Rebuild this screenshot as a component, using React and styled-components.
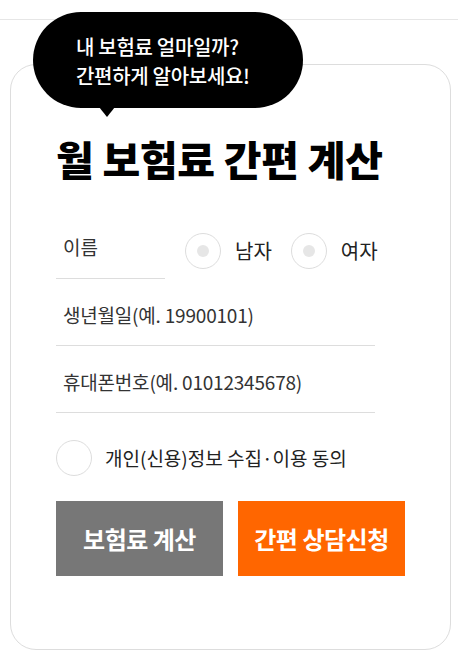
import React from 'react'
import styled, { createGlobalStyle } from 'styled-components'

const GlobalStyle = createGlobalStyle`
body {
  margin: 0;
  background: #fff;
  font-family: "Noto Sans CJK KR", "Noto Sans", sans-serif;
  color: #333;
}
* { box-sizing: border-box; }
`

export default function App() {
  return (
    <>
      <GlobalStyle />
      <Page>
        <TopLine />
        <Bubble>
          내 보험료 얼마일까?<br />
          간편하게 알아보세요!
        </Bubble>

        <CardWrap>
          <Card>
            <Title>월 보험료 간편 계산</Title>

            <NameRow>
              <NameField>이름</NameField>
              <GenderGroup>
                <Radio><Circle><Dot /></Circle><RadioLabel>남자</RadioLabel></Radio>
                <Radio><Circle><Dot /></Circle><RadioLabel>여자</RadioLabel></Radio>
              </GenderGroup>
            </NameRow>

            <Field>생년월일(예. 19900101)</Field>
            <Field>휴대폰번호(예. 01012345678)</Field>

            <AgreeRow>
              <Circle />
              <AgreeText>개인(신용)정보 수집·이용 동의</AgreeText>
            </AgreeRow>

            <Buttons>
              <Button $bg="#777777">보험료 계산</Button>
              <Button $bg="#ff6600">간편 상담신청</Button>
            </Buttons>
          </Card>
        </CardWrap>
      </Page>
    </>
  )
}

// Styled Components
const Page = styled.div`
position: relative;
width: 458px;
min-height: 654px;
`

const TopLine = styled.div`
height: 20px;
border-bottom: 1px solid #e6e6e6;
`

const Bubble = styled.div`
position: absolute;
top: 12px;
left: 33px;
width: 270px;
height: 96px;
padding: 20px 0 0 43px;
border-radius: 48px;
background: #000;
color: #fff;
font-size: 20px;
font-weight: 500;
line-height: 29px;
letter-spacing: -0.3px;
z-index: 2;
&::after {
  content: '';
  position: absolute;
  left: 66px;
  bottom: -9px;
  border-left: 8px solid transparent;
  border-right: 8px solid transparent;
  border-top: 10px solid #000;
}
`

const CardWrap = styled.div`
padding: 44px 7px 4px 10px;
`

const Card = styled.div`
border: 1px solid #dddddd;
border-radius: 26px;
padding: 68px 45px 73px 45px;
`

const Title = styled.h1`
margin: 0;
font-size: 41px;
line-height: 50px;
font-weight: 900;
color: #000;
letter-spacing: -0.3px;
`

const NameRow = styled.div`
display: flex;
align-items: center;
margin-top: 35px;
`

const NameField = styled.div`
width: 109px;
height: 61px;
padding: 17px 0 0 7px;
border-bottom: 1px solid #dddddd;
font-size: 19px;
line-height: 24px;
`

const GenderGroup = styled.div`
display: flex;
align-items: center;
gap: 19px;
margin-left: 20px;
padding-top: 5px;
`

const Radio = styled.label`
display: flex;
align-items: center;
gap: 14px;
`

const Circle = styled.span`
display: flex;
align-items: center;
justify-content: center;
width: 36px;
height: 36px;
border: 1px solid #dddddd;
border-radius: 50%;
background: #fff;
flex-shrink: 0;
`

const Dot = styled.span`
width: 12px;
height: 12px;
border-radius: 50%;
background: #e6e6e6;
`

const RadioLabel = styled.span`
font-size: 20px;
line-height: 24px;
color: #222;
`

const Field = styled.div`
width: 319px;
height: 67px;
padding: 24px 0 0 7px;
border-bottom: 1px solid #dddddd;
font-size: 19px;
line-height: 24px;
letter-spacing: -0.2px;
`

const AgreeRow = styled.div`
display: flex;
align-items: center;
gap: 13px;
margin-top: 27px;
`

const AgreeText = styled.span`
font-size: 19px;
line-height: 24px;
color: #222;
`

const Buttons = styled.div`
display: flex;
gap: 15px;
margin-top: 25px;
`

const Button = styled.button`
width: 167px;
height: 75px;
padding: 0;
border: none;
background: ${p => p.$bg};
color: #fff;
font-family: inherit;
font-size: 24px;
font-weight: 700;
letter-spacing: -0.5px;
cursor: pointer;
`
